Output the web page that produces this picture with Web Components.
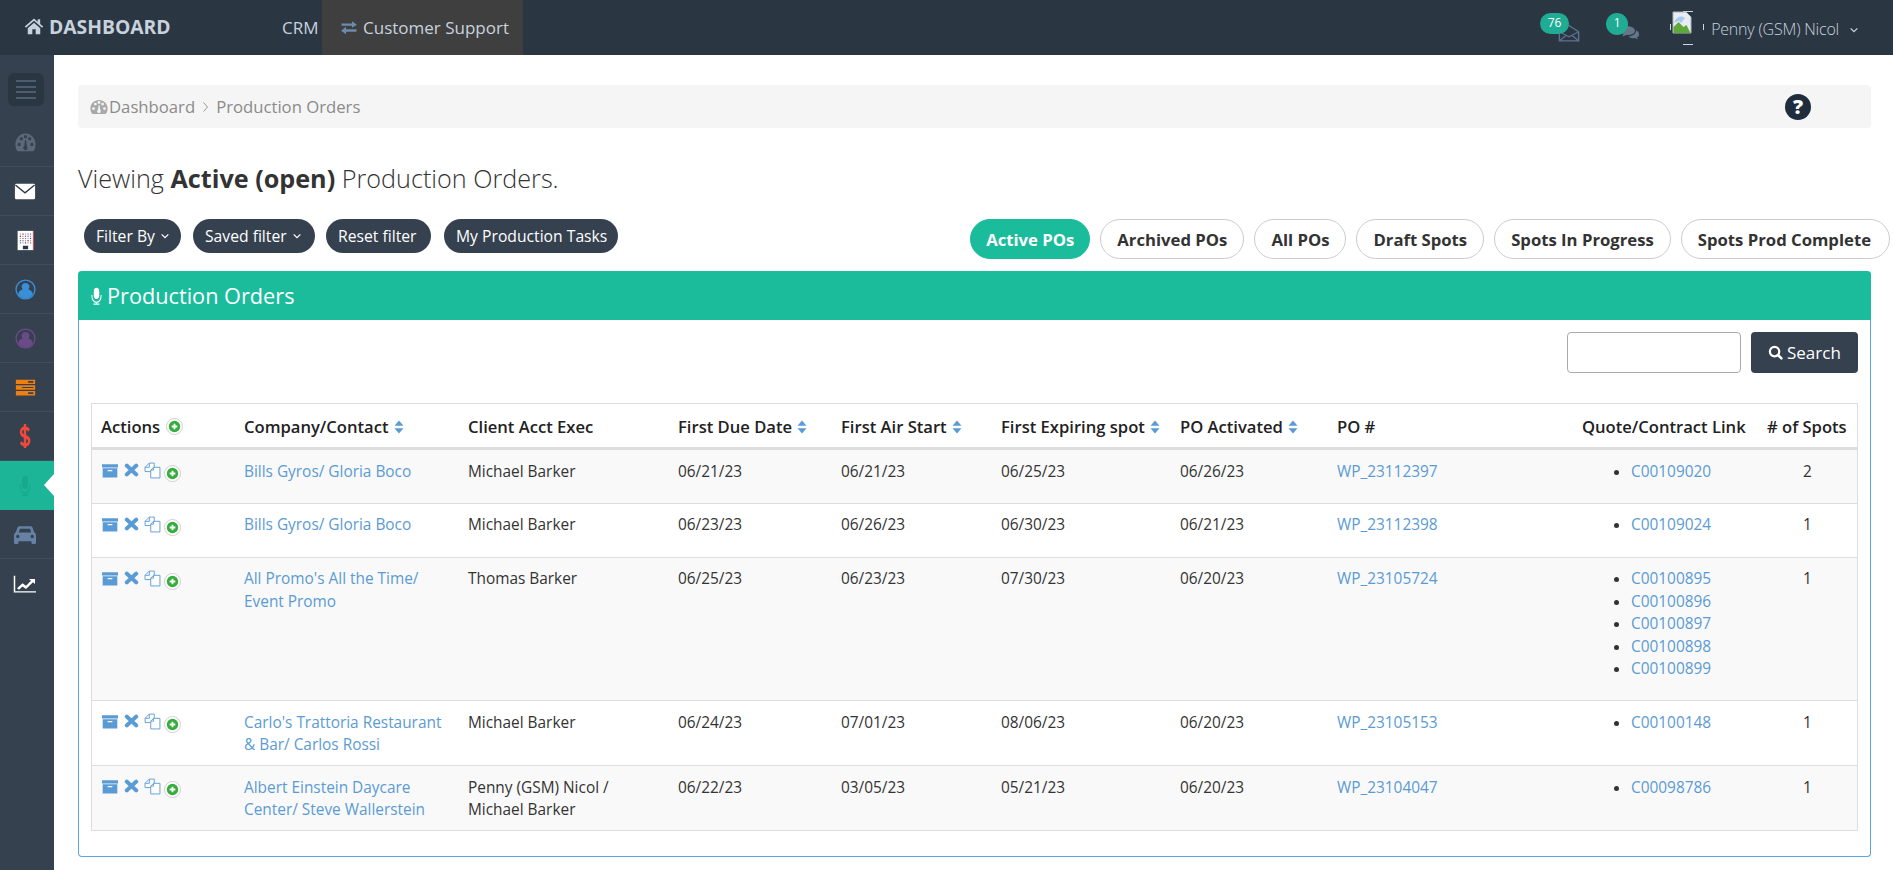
<!DOCTYPE html>
<html>
<head>
<meta charset="utf-8">
<title>Production Orders</title>
<style>
  html, body { margin: 0; padding: 0; background: #fff; overflow: hidden; }
  body { font-family: "Open Sans", "Liberation Sans", sans-serif; font-size: 14px; color: #333; }
</style>
</head>
<body>
<app-shell>
  <top-bar slot="top"></top-bar>
  <side-nav slot="side"></side-nav>

  <bread-crumb></bread-crumb>
  <page-title></page-title>
  <filter-row></filter-row>

  <po-panel heading="Production Orders">
    <po-table>
      <po-row odd company="Bills Gyros/ Gloria Boco" exec="Michael Barker" due="06/21/23" air="06/21/23" exp="06/25/23" act="06/26/23" po="WP_23112397" links="C00109020" spots="2"></po-row>
      <po-row company="Bills Gyros/ Gloria Boco" exec="Michael Barker" due="06/23/23" air="06/26/23" exp="06/30/23" act="06/21/23" po="WP_23112398" links="C00109024" spots="1"></po-row>
      <po-row odd company="All Promo's All the Time/ Event Promo" exec="Thomas Barker" due="06/25/23" air="06/23/23" exp="07/30/23" act="06/20/23" po="WP_23105724" links="C00100895,C00100896,C00100897,C00100898,C00100899" spots="1"></po-row>
      <po-row company="Carlo's Trattoria Restaurant &amp; Bar/ Carlos Rossi" exec="Michael Barker" due="06/24/23" air="07/01/23" exp="08/06/23" act="06/20/23" po="WP_23105153" links="C00100148" spots="1"></po-row>
      <po-row odd company="Albert Einstein Daycare Center/ Steve Wallerstein" exec="Penny (GSM) Nicol / Michael Barker" due="06/22/23" air="03/05/23" exp="05/21/23" act="06/20/23" po="WP_23104047" links="C00098786" spots="1"></po-row>
    </po-table>
  </po-panel>
</app-shell>

<script>
// icon shapes, all on a 24x24 box and coloured through currentColor
const ICONS = {
  home: '<path fill="currentColor" d="M12 3 1 12.6l1.4 1.5L12 5.8l9.6 8.3 1.4-1.5-3.6-3.1V4h-3v2.9zM4.5 14.6V22h5.5v-6h4v6h5.5v-7.4L12 8.200z"/>',
  exchange: '<path fill="currentColor" d="M2 6.500h14V3l6.500 5-6.500 4.500V9.500H2zM22 14.500H8V11l-6.500 5.500L8 21.500V18h14z"/>',
  gauge: '<path fill="currentColor" fill-rule="evenodd" d="M12 2.500C5.500 2.500 .5 7.700 .5 14c0 2.500.7 4.700 2 6.700.2.300.5.500.9.500h17.200c.4 0 .7-.2.9-.5 1.300-2 2-4.200 2-6.700 0-6.300-5-11.500-11.500-11.500zM4.700 16a1.900 1.900 0 1 1 0-3.800 1.900 1.900 0 0 1 0 3.800zm2.500-6a1.900 1.900 0 1 1 0-3.800 1.900 1.900 0 0 1 0 3.800zm4.800-2.100a1.900 1.900 0 1 1 0-3.800 1.900 1.900 0 0 1 0 3.800zM19.300 16a1.900 1.900 0 1 1 0-3.800 1.900 1.900 0 0 1 0 3.800zm-2.500-6a1.900 1.900 0 1 1 0-3.800 1.900 1.900 0 0 1 0 3.800zM13.500 19.500a2.500 2.500 0 0 1-4-2.500c.2-.6.6-1.100 1.100-1.400l.9-6.100h1.200l.9 6.200c1 .8 1.100 2.800-.1 3.800z"/>',
  mail: '<rect x="1" y="4" width="22" height="17" rx="1.500" fill="#fff"/><path d="M1.500 5.500 12 14l10.500-8.500" fill="none" stroke="#2b3643" stroke-width="1.400"/>',
  building: '<rect x="3" y="1" width="18" height="22" fill="#fff"/><rect x="20.400" y="1" width=".8" height="22" fill="#e0393e"/><rect x="9" y="18" width="6" height="4" fill="#2b3643"/>'
    + [0, 1, 2, 3, 4].map(i => [0, 1, 2, 3, 4].map(r => `<rect x="${5.500 + i * 2.900}" y="${4 + r * 2.500}" width="1.400" height="1.400" fill="${['#d88','#447','#d94','#85c','#48c'][(i + r) % 5]}"/>`).join('')).join(''),
  user: '<circle cx="12" cy="12" r="10.800" fill="none" stroke="currentColor" stroke-width="1.500"/><path fill="currentColor" d="M12 4.500a4.500 4.500 0 0 1 3.400 7.500c3 .8 4.600 2.600 5 5.400A10 10 0 0 1 12 22a10 10 0 0 1-8.400-4.600c.4-2.800 2-4.600 5-5.400A4.500 4.500 0 0 1 12 4.500z"/>',
  server: '<path fill="#ef7f0e" fill-rule="evenodd" d="M1 3h22v5H1zM15 4.500v2h6v-2zM1 9.500h22v5H1zM8 11.300v1.300h13v-1.300zM1 16h22v5H1zM15 17.500v2h6v-2z"/>',
  dollar: '<path fill="none" stroke="currentColor" stroke-width="3.200" d="M17.500 6.800C16 5.400 14 4.700 12 4.700c-3 0-5.300 1.500-5.300 3.800 0 5.500 11 2.500 11 8 0 2.300-2.500 3.800-5.500 3.800-2.300 0-4.500-.9-6-2.400M12 1v22"/>',
  mic: '<rect x="7" y="1" width="10" height="15" rx="5" fill="currentColor"/><path fill="none" stroke="currentColor" stroke-width="1.800" d="M3.500 10.500v1.500a8.500 8.500 0 0 0 17 0v-1.500M12 20.500V22M6.500 22.800h11"/>',
  car: '<path fill="currentColor" fill-rule="evenodd" d="M6.500 4h11c1 0 1.800.6 2.100 1.500L21.300 10c1.200.5 1.700 1.500 1.700 2.700V20a1 1 0 0 1-1 1h-2.500a1 1 0 0 1-1-1v-1.500h-13V20a1 1 0 0 1-1 1H2a1 1 0 0 1-1-1v-7.300c0-1.200.5-2.200 1.700-2.700l1.700-4.500C4.700 4.600 5.500 4 6.500 4zM7 6.500 5.800 10h12.400L17 6.500zM4.800 12.300a1.700 1.700 0 1 0 0 3.400 1.700 1.700 0 0 0 0-3.400zm14.400 0a1.700 1.700 0 1 0 0 3.400 1.700 1.700 0 0 0 0-3.400z"/>',
  chart: '<path fill="none" stroke="#fff" stroke-width="1.500" d="M1.500 2v19.500H23"/><path fill="#fff" d="m4 17 5.500-6 3.500 3 5-6-2-2h6v6l-2-2-7 8-3.500-3L6 19z"/>',
  archive: '<path fill="currentColor" fill-rule="evenodd" d="M0 2h24v5H0zM1 8.500h22V23H1zM8.500 11v2h7v-2z"/>',
  times: '<path fill="none" stroke="currentColor" stroke-width="6.500" stroke-linecap="round" d="M4.500 4.500l15 15M19.500 4.500l-15 15"/>',
  copy: '<path fill="#fff" stroke="currentColor" stroke-width="1.300" d="M7.500 1.500h7v12h-13V7.500z"/><path fill="#fff" stroke="currentColor" stroke-width="1.300" d="M13.500 7.500h9v15h-13v-11z"/><path fill="none" stroke="currentColor" stroke-width="1.300" d="M7.500 1.500v6h-6M13.500 7.500v4h-4"/>',
  plus: '<circle cx="12" cy="12" r="11.300" fill="#fff" stroke="#cfcfcf" stroke-width="1.400"/><circle cx="12" cy="12" r="8" fill="#35ad3c"/><path stroke="#fff" stroke-width="2.600" d="M12 8v8M8 12h8"/>',
  search: '<circle cx="10.500" cy="10.500" r="7.500" fill="none" stroke="currentColor" stroke-width="3.600"/><path stroke="currentColor" stroke-width="4" stroke-linecap="round" d="m16 16 5.500 5.500"/>',
  sort: '<path fill="#5b9bd5" d="M12 1 21 10H3zM12 23 3 14h18z"/>',
  chevron: '<path fill="none" stroke="currentColor" stroke-width="3" d="m4 8 8 8 8-8"/>',
  envopen: '<path fill="none" stroke="currentColor" stroke-width="1.500" d="M1.500 10.500 12 2l10.500 8.500V22.500h-21zM1.500 10.500 12 17l10.500-6.500M1.500 22.500 9 15M22.500 22.500 15 15"/>',
  comments: '<path fill="currentColor" d="M9.500 3C4.800 3 1 5.700 1 9c0 1.900 1.200 3.600 3.200 4.700-.3 1-.9 1.900-1.600 2.700 1.800-.3 3.300-1 4.400-1.900.8.200 1.600.3 2.500.3 4.700 0 8.500-2.700 8.500-5.800S14.200 3 9.500 3z"/><path fill="currentColor" d="M19.200 8.300c.1.300.1.500.1.800 0 4-4.100 7.200-9 7.400 1.200 1.500 3.300 2.500 5.700 2.500.7 0 1.300-.1 1.900-.2.800.7 2 1.300 3.600 1.500-.6-.6-1-1.400-1.200-2.200 1.700-.9 2.700-2.300 2.700-3.800 0-2.400-1.500-4.600-3.800-5.800z"/>'
};

class AppIcon extends HTMLElement {
  connectedCallback() {
    const size = this.getAttribute('size') || 16;
    const h = this.getAttribute('h') || size;
    this.attachShadow({mode: 'open'});
    this.shadowRoot.innerHTML = `
    <style>
      :host { display: inline-flex; flex: none; width: ${size}px; height: ${h}px; }
      svg { width: 100%; height: 100%; display: block; }
    </style>
    <svg viewBox="0 0 24 24" preserveAspectRatio="none">${ICONS[this.getAttribute('name')]}</svg>`;
  }
}
customElements.define('app-icon', AppIcon);

class AppShell extends HTMLElement {
  connectedCallback() {
    this.attachShadow({mode: 'open'});
    this.shadowRoot.innerHTML = `
    <style>
      :host { display: block; height: 870px; overflow: hidden; }
      .body { display: flex; height: 815px; }
      main { flex: 1; min-width: 0; padding: 30px 22px 0 24px; box-sizing: border-box; }
    </style>
    <slot name="top"></slot>
    <div class="body">
      <slot name="side"></slot>
      <main><slot></slot></main>
    </div>`;
  }
}
customElements.define('app-shell', AppShell);

class TopBar extends HTMLElement {
  connectedCallback() {
    this.attachShadow({mode: 'open'});
    this.shadowRoot.innerHTML = `
    <style>
      :host { display: flex; align-items: stretch; height: 55px; background: #2b3643; color: #c7d2dd; font-size: 17px; }
      .brand { display: flex; align-items: center; gap: 5px; width: 258px; padding-left: 24px; font-size: 19.300px; font-weight: 700; padding-bottom: 3px; }
      .crm { display: flex; align-items: center; width: 40px; padding-bottom: 1px; }
      .support { display: flex; align-items: center; gap: 5px; width: 201px; padding: 0 0 1px 18px; box-sizing: border-box; background: #3f3f3f; }
      .support app-icon { color: #6d8bab; }
      .right { margin-left: auto; display: flex; align-items: stretch; padding-right: 34px; }
      .note { position: relative; }
      .note app-icon { position: absolute; color: #5d7390; }
      .badge { position: absolute; top: 12.500px; height: 21px; border-radius: 11px; background: #1fab94; color: #fff; font-size: 12px; line-height: 19px; text-align: center; }
      .mail { width: 66px; }
      .chat { width: 64px; }
      .avatar { width: 36px; height: 36px; align-self: center; margin: 2px 5px 0 0; }
      .name { display: flex; align-items: center; gap: 10px; font-weight: 300; font-size: 16px; letter-spacing: -.2px; padding-top: 3px; }
      .name app-icon { color: #c7d2dd; margin-top: 1px; }
    </style>
    <div class="brand"><app-icon name="home" size="20" h="20"></app-icon>DASHBOARD</div>
    <div class="crm">CRM</div>
    <div class="support"><app-icon name="exchange" size="18" h="17"></app-icon>Customer Support</div>
    <div class="right">
      <div class="note mail">
        <app-icon name="envopen" size="22" h="18" style="left:18px;top:24px"></app-icon>
        <span class="badge" style="left:0;width:29px">76</span>
      </div>
      <div class="note chat">
        <app-icon name="comments" size="20" h="18" style="left:14px;top:24px;color:#66768a"></app-icon>
        <span class="badge" style="left:0;width:22px;height:22px">1</span>
      </div>
      <svg class="avatar" viewBox="0 0 36 36">
        <path d="M13 .5h10M13 33.500h10M.5 13v6M33.500 13v6" stroke="#cfd6dd" fill="none"/>
        <path d="M3 1h13l5 5v16H3z" fill="#e8edf2" stroke="#aab4bf"/>
        <path d="M3.500 22V16l5-5 5 5 3-2 4 8z" fill="#5fa83a"/>
        <path d="M4 12c2-6 7-8 11-5l-4 5-2-2z" fill="#a9c9ee"/>
      </svg>
      <div class="name">Penny (GSM) Nicol<app-icon name="chevron" size="10" h="10"></app-icon></div>
    </div>`;
  }
}
customElements.define('top-bar', TopBar);

class SideNav extends HTMLElement {
  connectedCallback() {
    const items = [
      ['gauge', '#5c6878', 21, 23],
      ['mail', '', 22, 22],
      ['building', '', 21, 21],
      ['user', '#3a8fd9', 21, 21],
      ['user', '#6b4a8a', 21, 21],
      ['server', '', 21, 21],
      ['dollar', '#f0483a', 18, 26],
      ['mic', '#17a98b', 14, 21, true],
      ['car', '#6582a5', 24, 25],
      ['chart', '', 24, 20]
    ];
    this.attachShadow({mode: 'open'});
    this.shadowRoot.innerHTML = `
    <style>
      :host { display: block; flex: none; width: 54px; background: #364150; }
      .head { height: 63px; box-sizing: border-box; padding: 18px 0 0 8px; }
      .toggle { width: 36px; height: 33px; background: #2b3643; border-radius: 6px; display: flex; flex-direction: column; justify-content: center; align-items: center; gap: 3.500px; }
      .toggle i { display: block; width: 20px; height: 2px; background: #4d5d70; }
      .item { position: relative; height: 49px; box-sizing: border-box; border-bottom: 1px solid #414d5c; display: flex; align-items: center; justify-content: center; padding-right: 4px; }
      .item:last-child { border-bottom: 0; }
      .item.active { background: #1cb598; border-bottom-color: #1cb598; }
      .item.active::after { content: ""; position: absolute; right: 0; top: 13px; border: 11px solid transparent; border-left: 0; border-right: 10px solid #fff; }
    </style>
    <div class="head"><div class="toggle"><i></i><i></i><i></i><i></i></div></div>
    ${items.map(([n, c, w, h, on]) => `<div class="item${on ? ' active' : ''}"><app-icon name="${n}" size="${w}" h="${h}" style="color:${c}"></app-icon></div>`).join('')}`;
  }
}
customElements.define('side-nav', SideNav);

class BreadCrumb extends HTMLElement {
  connectedCallback() {
    this.attachShadow({mode: 'open'});
    this.shadowRoot.innerHTML = `
    <style>
      :host { display: flex; align-items: center; height: 43px; padding: 0 60px 0 12px; background: #f5f5f5; border-radius: 4px; color: #8b8b8b; font-size: 16.700px; }
      .sep { margin: 0 8px 0 8px; width: 5px; }
      .help { margin-left: auto; width: 26px; height: 26px; border-radius: 50%; background: #1f2d3d; color: #fff; font-weight: 800; font-size: 20px; line-height: 26px; text-align: center; flex: none; }
      .gauge { margin-right: 1px; color: #a9a9a9; }
    </style>
    <app-icon class="gauge" name="gauge" size="18" h="18"></app-icon>
    <span>Dashboard</span>
    <svg class="sep" viewBox="0 0 5 10" height="10"><path d="m.5 .5 4 4.500-4 4.500" fill="none" stroke="#999"/></svg>
    <span>Production Orders</span>
    <span class="help">?</span>`;
  }
}
customElements.define('bread-crumb', BreadCrumb);

class PageTitle extends HTMLElement {
  connectedCallback() {
    this.attachShadow({mode: 'open'});
    this.shadowRoot.innerHTML = `
    <style>
      :host { display: block; margin: 33px 0 24px; font-size: 25.200px; line-height: 34px; font-weight: 300; color: #333; }
      b { font-weight: 700; }
    </style>
    Viewing <b>Active (open)</b> Production Orders.`;
  }
}
customElements.define('page-title', PageTitle);

class FilterRow extends HTMLElement {
  connectedCallback() {
    const tabs = ['Active POs', 'Archived POs', 'All POs', 'Draft Spots', 'Spots In Progress', 'Spots Prod Complete'];
    this.attachShadow({mode: 'open'});
    this.shadowRoot.innerHTML = `
    <style>
      :host { display: flex; justify-content: space-between; align-items: flex-start; height: 40px; margin: 0 -19px 12px 6px; }
      .left { display: flex; }
      .btn { display: flex; align-items: center; gap: 5px; height: 34px; padding-left: 12px; box-sizing: border-box; border-radius: 17px; background: #364150; color: #fff; font-size: 15.700px; white-space: nowrap; }
      .right { display: flex; gap: 10px; }
      .tab { display: flex; align-items: center; height: 40px; box-sizing: border-box; padding: 0 16px; border: 1px solid #ccc; border-radius: 20px; background: #fff; color: #333; font-weight: 700; font-size: 16.700px; white-space: nowrap; }
      .tab:first-child { padding: 0 15px; }
      .tab:last-child { padding-right: 18px; }
      .tab.on { background: #1abc9c; border-color: #1abc9c; color: #fff; }
    </style>
    <div class="left">
      <div class="btn" style="width:97px;margin-right:12px">Filter By<app-icon name="chevron" size="10" h="10"></app-icon></div>
      <div class="btn" style="width:122px;margin-right:11px">Saved filter<app-icon name="chevron" size="10" h="10"></app-icon></div>
      <div class="btn" style="width:105px;margin-right:13px">Reset filter</div>
      <div class="btn" style="width:174px">My Production Tasks</div>
    </div>
    <div class="right">${tabs.map((t, i) => `<div class="tab${i ? '' : ' on'}">${t}</div>`).join('')}</div>`;
  }
}
customElements.define('filter-row', FilterRow);

class PoPanel extends HTMLElement {
  connectedCallback() {
    this.attachShadow({mode: 'open'});
    this.shadowRoot.innerHTML = `
    <style>
      :host { display: block; border: 1px solid #5aa7e0; border-top: 0; border-radius: 4px; background: #fff; }
      .head { display: flex; align-items: center; gap: 4px; height: 49px; margin: 0 -1px; padding-left: 12px; background: #1abc9c; color: #fff; font-size: 21.700px; border-radius: 4px 4px 0 0; }
      .body { padding: 12px 12px 25px; }
      .search { display: flex; justify-content: flex-end; gap: 10px; height: 41px; margin-bottom: 30px; }
      input { width: 174px; height: 41px; box-sizing: border-box; border: 1px solid #aaa; border-radius: 4px; background: #fff; padding: 0; }
      button { display: flex; align-items: center; gap: 4px; width: 107px; height: 41px; padding: 0 0 0 17px; border: 0; border-radius: 4px; background: #364150; color: #fff; font: 17px "Open Sans", sans-serif; }
    </style>
    <div class="head"><app-icon name="mic" size="13" h="18"></app-icon><span>${this.getAttribute('heading')}</span></div>
    <div class="body">
      <div class="search"><input type="text"><button><app-icon name="search" size="15" h="15"></app-icon>Search</button></div>
      <slot></slot>
    </div>`;
  }
}
customElements.define('po-panel', PoPanel);

class PoTable extends HTMLElement {
  connectedCallback() {
    const heads = [
      ['Actions', 0, 'plus'], ['Company/Contact', 1], ['Client Acct Exec', 0], ['First Due Date', 1], ['First Air Start', 1],
      ['First Expiring spot', 1], ['PO Activated', 1], ['PO #', 0], ['Quote/Contract Link', 0], ['# of Spots', 0]
    ];
    this.attachShadow({mode: 'open'});
    this.shadowRoot.innerHTML = `
    <style>
      :host {
        display: block; border: 1px solid #ddd; font-size: 15.400px;
        --po-cols: 143px 224px 210px 163px 160px 179px 157px 245px 185px 99px;
      }
      .head { display: grid; grid-template-columns: var(--po-cols); height: 41px; padding-top: 2px; align-items: center; border-bottom: 3px solid #ddd; color: #222; font-size: 16.600px; font-weight: 600; }
      .head div { display: flex; align-items: center; gap: 4px; padding-left: 9px; white-space: nowrap; }
    </style>
    <div class="head">${heads.map(([t, s, i]) => `<div>${t}${s ? '<app-icon name="sort" size="12" h="14"></app-icon>' : ''}${i ? '<app-icon name="plus" size="17" h="17" style="margin-left:2px"></app-icon>' : ''}</div>`).join('')}</div>
    <slot></slot>`;
  }
}
customElements.define('po-table', PoTable);

class PoRow extends HTMLElement {
  connectedCallback() {
    const a = n => this.getAttribute(n).replace(/&/g, '&amp;');
    const links = this.getAttribute('links').split(',');
    this.attachShadow({mode: 'open'});
    this.shadowRoot.innerHTML = `
    <style>
      :host { display: grid; grid-template-columns: var(--po-cols); border-top: 1px solid #ddd; line-height: 22.400px; color: #333; background: ${this.hasAttribute('odd') ? '#f9f9f9' : '#fff'}; }
      :host(:first-child) { border-top: 0; }
      div { padding: 10.500px 9px 8.500px; min-width: 0; }
      a { color: #5b9bd5; text-decoration: none; }
      .acts { display: flex; align-items: flex-start; color: #5b9bd5; padding-top: 13px; }
      ul { margin: 0 0 11.500px; padding: 0 0 0 49px; }
      .num { padding-left: 0; padding-right: 0; text-align: center; }
    </style>
    <div class="acts">
      <app-icon name="archive" size="16" h="15" style="margin:0 6px 0 1px"></app-icon>
      <app-icon name="times" size="15" h="14" style="margin-right:5px"></app-icon>
      <app-icon name="copy" size="17" h="17" style="margin:-1px 3px 0 0"></app-icon>
      <app-icon name="plus" size="17" h="17" style="margin-top:2px"></app-icon>
    </div>
    <div><a>${a('company')}</a></div>
    <div>${a('exec')}</div>
    <div>${a('due')}</div>
    <div>${a('air')}</div>
    <div>${a('exp')}</div>
    <div>${a('act')}</div>
    <div><a>${a('po')}</a></div>
    <div><ul>${links.map(l => `<li><a>${l}</a></li>`).join('')}</ul></div>
    <div class="num">${a('spots')}</div>`;
  }
}
customElements.define('po-row', PoRow);
</script>
</body>
</html>
